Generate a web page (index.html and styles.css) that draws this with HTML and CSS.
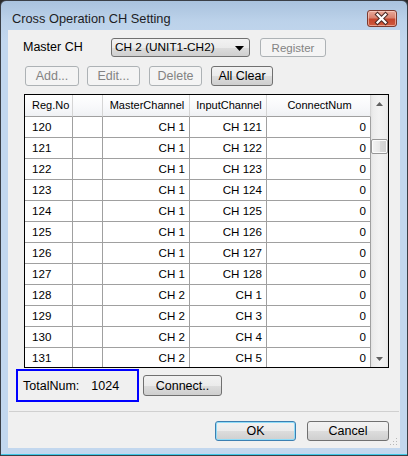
FILE: index.html
```html
<!DOCTYPE html>
<html>
<head>
<meta charset="utf-8">
<link rel="stylesheet" href="styles.css">
</head>
<body>
<div class="window">
  <div class="titlebar">
    <span class="title">Cross Operation CH Setting</span>
    <div class="close">
      <svg width="29" height="17" viewBox="0 0 29 17">
        <path d="M10.5 4.5 L18.5 12.5 M18.5 4.5 L10.5 12.5" stroke="#4a2a26" stroke-width="4.2" stroke-linecap="square" fill="none"/>
        <path d="M10.5 4.5 L18.5 12.5 M18.5 4.5 L10.5 12.5" stroke="#ffffff" stroke-width="2.2" stroke-linecap="square" fill="none"/>
      </svg>
    </div>
  </div>
  <div class="client">
    <div class="row1">
      <span class="label">Master CH</span>
      <div class="select">
        <span class="select-text">CH 2 (UNIT1-CH2)</span>
        <svg class="select-arrow" width="9" height="5" viewBox="0 0 9 5"><path d="M0 0 H9 L4.5 5 Z" fill="#000"/></svg>
      </div>
      <div class="btn disabled register">Register</div>
    </div>
    <div class="row2">
      <div class="btn disabled w54">Add...</div>
      <div class="btn disabled w53">Edit...</div>
      <div class="btn disabled w53 ml9">Delete</div>
      <div class="btn w62 ml9">All Clear</div>
    </div>
    <div class="grid">
      <div class="table-area">
        <div class="grow head">
          <div class="c hc hreg">Reg.No</div><div class="c hc"></div><div class="c hc">MasterChannel</div><div class="c hc">InputChannel</div><div class="c hc">ConnectNum</div>
        </div>
        <div class="grow"><div class="c reg">120</div><div class="c"></div><div class="c num">CH 1</div><div class="c num">CH 121</div><div class="c num">0</div></div>
        <div class="grow"><div class="c reg">121</div><div class="c"></div><div class="c num">CH 1</div><div class="c num">CH 122</div><div class="c num">0</div></div>
        <div class="grow"><div class="c reg">122</div><div class="c"></div><div class="c num">CH 1</div><div class="c num">CH 123</div><div class="c num">0</div></div>
        <div class="grow"><div class="c reg">123</div><div class="c"></div><div class="c num">CH 1</div><div class="c num">CH 124</div><div class="c num">0</div></div>
        <div class="grow"><div class="c reg">124</div><div class="c"></div><div class="c num">CH 1</div><div class="c num">CH 125</div><div class="c num">0</div></div>
        <div class="grow"><div class="c reg">125</div><div class="c"></div><div class="c num">CH 1</div><div class="c num">CH 126</div><div class="c num">0</div></div>
        <div class="grow"><div class="c reg">126</div><div class="c"></div><div class="c num">CH 1</div><div class="c num">CH 127</div><div class="c num">0</div></div>
        <div class="grow"><div class="c reg">127</div><div class="c"></div><div class="c num">CH 1</div><div class="c num">CH 128</div><div class="c num">0</div></div>
        <div class="grow"><div class="c reg">128</div><div class="c"></div><div class="c num">CH 2</div><div class="c num">CH 1</div><div class="c num">0</div></div>
        <div class="grow"><div class="c reg">129</div><div class="c"></div><div class="c num">CH 2</div><div class="c num">CH 3</div><div class="c num">0</div></div>
        <div class="grow"><div class="c reg">130</div><div class="c"></div><div class="c num">CH 2</div><div class="c num">CH 4</div><div class="c num">0</div></div>
        <div class="grow"><div class="c reg">131</div><div class="c"></div><div class="c num">CH 2</div><div class="c num">CH 5</div><div class="c num">0</div></div>
      </div>
      <div class="vscroll">
        <div class="sarrow"><svg width="7" height="4" viewBox="0 0 7 4"><path d="M0 4 H7 L3.5 0 Z" fill="#606060"/></svg></div>
        <div class="strack">
          <div class="thumb"></div>
        </div>
        <div class="sarrow"><svg width="7" height="4" viewBox="0 0 7 4"><path d="M0 0 H7 L3.5 4 Z" fill="#606060"/></svg></div>
      </div>
    </div>
    <div class="row3">
      <div class="total"><span>TotalNum:</span><span class="total-val">1024</span></div>
      <div class="btn connect">Connect..</div>
    </div>
    <div class="sep"></div>
    <div class="footer">
      <div class="btn default w81">OK</div>
      <div class="btn w82">Cancel</div>
    </div>
    <svg class="grip" width="8" height="8" viewBox="0 0 8 8">
      <g fill="#b8b8b8">
        <rect x="6" y="0" width="1" height="1"/>
        <rect x="3" y="3" width="1" height="1"/><rect x="6" y="3" width="1" height="1"/>
        <rect x="0" y="6" width="1" height="1"/><rect x="3" y="6" width="1" height="1"/><rect x="6" y="6" width="1" height="1"/>
      </g>
    </svg>
  </div>
</div>
</body>
</html>
```

FILE: styles.css
```css
* { box-sizing: border-box; }
html, body { margin: 0; padding: 0; background: #2b2b2b; }
body { width: 408px; height: 456px; overflow: hidden; font-family: "Liberation Sans", Arial, sans-serif; font-size: 12.5px; color: #000; }

.window {
  width: 408px; height: 456px;
  border: 1px solid #3a3f46;
  border-radius: 6px 6px 0 0;
  background: linear-gradient(#a9c2dd 0px, #bcd2ea 20px, #c2d7ee 40px, #c2d7ee 100%);
  display: flex; flex-direction: column;
  box-shadow: inset 0 -1px 0 #3fc7e6;
}
.titlebar {
  height: 29px; flex: none;
  display: flex; align-items: flex-start;
  padding-left: 11px;
}
.title { margin-top: 10px; font-size: 12.8px; color: #1d1d24; line-height: 16px; }
.close {
  margin-left: auto; margin-right: 10px; margin-top: 9px;
  width: 30px; height: 17px;
  border: 1px solid #7c3a2f; border-radius: 3px;
  background: linear-gradient(#e9a99a 0%, #d9826f 45%, #c4452c 55%, #d05a3e 100%);
  box-shadow: inset 0 0 0 1px rgba(255,220,210,0.55);
  display: flex; align-items: center; justify-content: center;
}
.close svg { display: block; margin: -1px 0 0 -1px; }

.client {
  position: relative;
  margin: 0 7px 7px 7px;
  flex: 1;
  background: #f0f0f0;
  display: flex; flex-direction: column;
}

.row1 { display: flex; align-items: center; margin-top: 8px; height: 19px; }
.label { width: 103px; padding-left: 15px; line-height: 19px; }
.select {
  width: 139px; height: 19px;
  border: 1px solid #707070; border-radius: 3px;
  background: linear-gradient(#f2f2f2 0%, #ebebeb 50%, #dddddd 50%, #cfcfcf 100%);
  display: flex; align-items: center; padding-left: 3px; padding-right: 5px;
  font-size: 11.8px;
}
.select-text { flex: 1; line-height: 17px; }
.select-arrow { display: block; margin-top: 1px; }

.btn {
  display: flex; align-items: center; justify-content: center;
  height: 20px; line-height: 18px;
  border: 1px solid #707070; border-radius: 3px;
  background: linear-gradient(#f2f2f2 0%, #ebebeb 50%, #dddddd 50%, #cfcfcf 100%);
  color: #000;
}
.btn.disabled {
  border-color: #adb2b5;
  background: #f4f4f4;
  color: #838383;
}
.btn.default {
  border-color: #3c7fb1;
  box-shadow: inset 0 0 0 1px #8fdcf8;
}
.register { width: 66px; height: 19px; margin-left: 10px; font-size: 11.5px; }

.row2 { display: flex; margin-top: 9px; padding-left: 17px; gap: 8px; }
.w54 { width: 54px; }
.w53 { width: 53px; }
.w62 { width: 62px; }
.w81 { width: 81px; }
.w82 { width: 82px; }
.ml9 { margin-left: 1px; }

.grid {
  margin-top: 8px; margin-left: 16px;
  width: 365px; height: 274px;
  border: 1px solid #000;
  background: #fff;
  display: flex;
  overflow: hidden;
}
.table-area { width: 346px; flex: none; overflow: hidden; }
.grow {
  display: grid;
  grid-template-columns: 48px 30px 87px 77px 104px;
  height: 21px;
  font-size: 11.6px;
}
.grow.head { height: 22px; font-size: 11px; background: linear-gradient(#ffffff 0%, #f7f8fa 60%, #eef0f3 100%); }
.c {
  border-right: 1px solid #a0a0a0;
  border-bottom: 1px solid #a0a0a0;
  line-height: 20px;
  white-space: nowrap; overflow: hidden;
}
.hc { text-align: center; border-right-color: #d5d5d5; border-bottom-color: #a0a0a0; line-height: 21px; padding-left: 2px; }
.hreg { text-align: left; padding-left: 7px; }
.reg { padding-left: 7px; }
.num { text-align: right; padding-right: 4px; }

.vscroll {
  width: 17px; flex: none;
  display: flex; flex-direction: column;
  background: linear-gradient(90deg, #e3e3e3 0px, #ececec 2px, #f2f2f2 8px, #ececec 15px, #e3e3e3 17px);
}
.sarrow { height: 17px; flex: none; display: flex; align-items: center; justify-content: center; }
.sarrow svg { display: block; }
.strack { flex: 1; padding-top: 27px; }
.thumb {
  width: 17px; height: 15px;
  border: 1px solid #979797; border-radius: 2px;
  background: linear-gradient(90deg, #f3f3f3 0%, #e8e8e8 50%, #d8d8d8 51%, #cfcfcf 100%);
  box-shadow: inset 0 0 0 1px #fbfbfb;
}

.row3 { display: flex; align-items: center; margin-top: 1px; margin-left: 8px; height: 33px; }
.total {
  width: 123px; height: 33px;
  border: 2px solid #0000ff;
  display: flex; align-items: center; padding-left: 5px;
}
.total-val { margin-left: 12px; }
.connect { width: 79px; height: 21px; margin-left: 4px; }

.sep { height: 1px; margin: 9px 1px 0 1px; background: #d0d0d0; }

.footer { display: flex; justify-content: flex-end; gap: 11px; margin-top: 9px; padding-right: 11px; }

.grip { position: absolute; right: 2px; bottom: 2px; display: block; }
```
